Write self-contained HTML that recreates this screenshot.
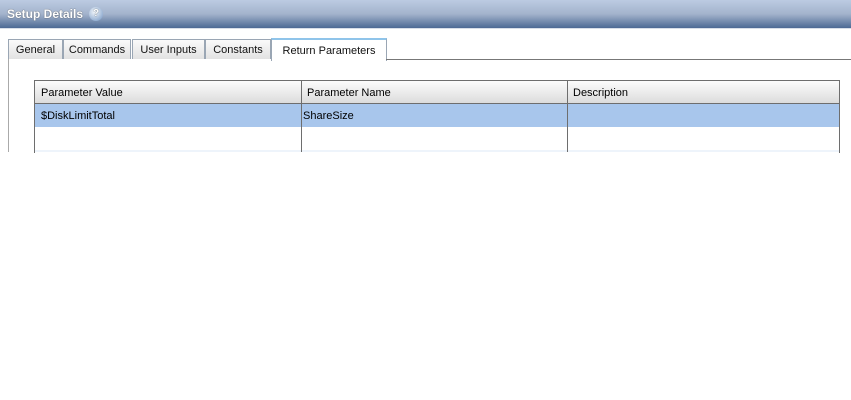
<html><head><style>
body{margin:0;width:851px;height:400px;background:#fff;font-family:"Liberation Sans",sans-serif;font-size:11px;position:relative;overflow:hidden}
.a{position:absolute}
.hdr{left:0;top:0;width:851px;height:28px;background:linear-gradient(#bccbe2,#a3b3cc 50%,#4d6a94);border-bottom:1px solid #d8dee8}
.tab{position:absolute;top:39px;height:20px;border:1px solid #9aa6b4;border-bottom:none;background:linear-gradient(#fafafa,#e2e2e2);box-sizing:border-box;text-align:center;line-height:21px;color:#111}
</style></head><body>
<div class="a hdr"></div>
<div class="a" style="left:7px;top:7px;color:#fff;font-weight:bold;font-size:12px;text-shadow:0 0 1px #333">Setup Details</div>
<div class="a" style="left:89px;top:7px;width:14px;height:14px;border-radius:50%;background:radial-gradient(circle at 40% 35%,#f4f8fc,#6f93c2);color:#fff;font-weight:bold;font-size:10px;text-align:center;line-height:14px;text-shadow:0 0 1px #234">?</div>
<div class="tab" style="left:8px;width:55px">General</div>
<div class="tab" style="left:63px;width:68px">Commands</div>
<div class="tab" style="left:132px;width:73px">User Inputs</div>
<div class="tab" style="left:205px;width:66px">Constants</div>
<div class="tab" style="left:271px;top:38px;height:23px;width:116px;background:#fff;border-top:2px solid #8fc4ea;line-height:23px">Return Parameters</div>
<div class="a" style="left:386px;top:59px;width:465px;height:1px;background:#777"></div>
<div class="a" style="left:8px;top:59px;width:1px;height:93px;background:#aaa"></div>
<div class="a" style="left:34px;top:80px;width:804px;height:72px;border:1px solid #6e6e6e;border-bottom:none"></div>
<div class="a" style="left:35px;top:81px;width:804px;height:22px;background:linear-gradient(#fcfcfc,#dcdcdc);border-bottom:1px solid #6e6e6e"></div>
<div class="a" style="left:35px;top:104px;width:804px;height:23px;background:#a8c6ec"></div>
<div class="a" style="left:35px;top:150px;width:804px;height:2px;background:#eef4fb"></div>
<div class="a" style="left:301px;top:81px;width:1px;height:71px;background:#6e6e6e"></div>
<div class="a" style="left:567px;top:81px;width:1px;height:71px;background:#6e6e6e"></div>
<div class="a" style="left:41px;top:87px">Parameter Value</div>
<div class="a" style="left:307px;top:87px">Parameter Name</div>
<div class="a" style="left:573px;top:87px">Description</div>
<div class="a" style="left:41px;top:110px">$DiskLimitTotal</div>
<div class="a" style="left:303px;top:110px">ShareSize</div>
</body></html>
